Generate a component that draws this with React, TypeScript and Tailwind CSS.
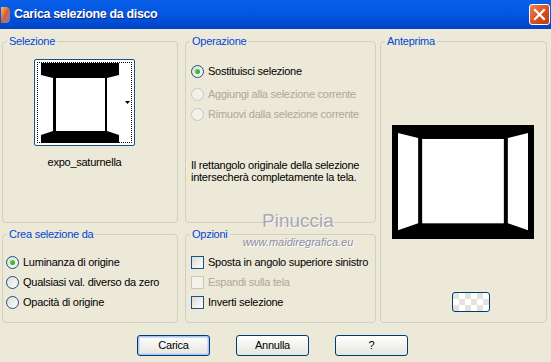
import type { ReactNode } from 'react';

const FONT = { fontFamily: '"Liberation Sans", Arial, sans-serif' };

function Group({ title, className, children }: { title: string; className: string; children?: ReactNode }) {
  return (
    <fieldset className={`rounded-[4px] border border-[#D0D0BF] ${className}`}>
      <legend className="ml-[4px] px-[2px] text-[11px] leading-[13px] text-[#0046D5]">{title}</legend>
      {children}
    </fieldset>
  );
}

function Radio({ label, checked, disabled }: { label: string; checked?: boolean; disabled?: boolean }) {
  return (
    <div className="flex h-[20px] items-center gap-[4px]">
      <span
        className={`flex h-[13px] w-[13px] items-center justify-center rounded-full border ${
          disabled ? 'border-[#CAC8BB] bg-[#F2F1EA]' : 'border-[#1C5180] bg-gradient-to-br from-[#DCDCD5] to-white'
        }`}
      >
        {checked && <span className="h-[5px] w-[5px] rounded-full bg-gradient-to-br from-[#55D751] to-[#21A121]" />}
      </span>
      <span className={disabled ? 'text-[#ACA899]' : 'text-black'}>{label}</span>
    </div>
  );
}

function Check({ label, disabled }: { label: string; disabled?: boolean }) {
  return (
    <div className="flex h-[20px] items-center gap-[4px]">
      <span
        className={`h-[13px] w-[13px] border ${
          disabled ? 'border-[#CAC8BB] bg-[#F2F1EA]' : 'border-[#1C5180] bg-gradient-to-br from-[#DCDCD5] to-white'
        }`}
      />
      <span className={disabled ? 'text-[#ACA899]' : 'text-black'}>{label}</span>
    </div>
  );
}

function XpButton({ label, isDefault }: { label: string; isDefault?: boolean }) {
  return (
    <button
      type="button"
      className={`h-[21px] w-[73px] rounded-[3px] border border-[#003C74] bg-gradient-to-b from-white to-[#E6E5DE] text-[11px] text-black ${
        isDefault ? 'shadow-[inset_0_0_0_1px_#A8C6F2,inset_0_0_0_2px_#CEDDF7]' : ''
      }`}
    >
      {label}
    </button>
  );
}

// room-shaped selection for the preview
function RoomShape({ w, h, border }: { w: number; h: number; border: number }) {
  const b = border;
  const side = (w - 2 * b) * 0.155;
  const line = 4;
  const top = h * 0.07;
  const bot = h * 0.88;
  return (
    <svg width={w} height={h} viewBox={`0 0 ${w} ${h}`}>
      <rect width={w} height={h} fill="#000" />
      <polygon points={`${b},${top} ${b + side},${top + 5} ${b + side},${bot - 2} ${b},${bot + 5}`} fill="#fff" />
      <rect x={b + side + line} y={top + 6} width={w - 2 * (b + side + line)} height={bot - top - 8} fill="#fff" />
      <polygon
        points={`${w - b - side},${top + 5} ${w - b},${top} ${w - b},${bot + 5} ${w - b - side},${bot - 2}`}
        fill="#fff"
      />
    </svg>
  );
}

export default function App() {
  return (
    <div className="relative h-[362px] w-[551px] overflow-hidden bg-[#ECE9D8] text-[11px] tracking-[-0.25px]" style={FONT}>
      {/* title bar */}
      <div className="flex h-[29px] items-center bg-gradient-to-b from-[#0A5FE8] via-[#0256E3] to-[#0043C6] pl-[1px] pr-[1px]">
        <span className="h-[16px] w-[9px] rounded-r-[4px] bg-gradient-to-br from-[#F4C26A] via-[#D85B2E] to-[#4A7BD0]" />
        <span className="ml-[4px] text-[12.5px] font-bold tracking-[-0.35px] text-white [text-shadow:1px_1px_0_#0A2A7A]">
          Carica selezione da disco
        </span>
        <span className="ml-auto flex h-[21px] w-[21px] items-center justify-center rounded-[3px] border border-white bg-gradient-to-br from-[#E8825E] via-[#D9531F] to-[#B83A10]">
          <svg width="13" height="13" viewBox="0 0 13 13">
            <path d="M2 2 L11 11 M11 2 L2 11" stroke="#fff" strokeWidth="2.2" strokeLinecap="square" />
          </svg>
        </span>
      </div>

      {/* body */}
      <div className="flex pl-[2px] pt-[6px]">
        <div className="flex w-[176px] flex-col gap-[5px]">
          <Group title="Selezione" className="h-[188px]">
            <div className="ml-[31px] mt-[11px] flex w-[101px] flex-col items-center">
              <div className="relative flex h-[87px] w-[101px] items-center rounded-[2px] border border-[#1C5180] bg-white">
                <div className="absolute inset-[2px] border border-dotted border-black" />
                <div className="ml-[6px]">
                  <svg width="78" height="80" viewBox="0 0 78 80">
                    <rect width="78" height="80" fill="#000" />
                    <polygon points="0,12 12,15 12,68 0,72" fill="#fff" />
                    <rect x="15" y="15" width="49" height="53" fill="#fff" />
                    <polygon points="66,15 78,12 78,72 66,68" fill="#fff" />
                  </svg>
                </div>
                <svg className="ml-[6px]" width="5" height="3" viewBox="0 0 5 3">
                  <polygon points="0,0 5,0 2.5,3" fill="#000" />
                </svg>
              </div>
              <div className="mt-[8px] text-black">expo_saturnella</div>
            </div>
          </Group>
          <Group title="Crea selezione da" className="h-[95px]">
            <div className="ml-[3px] mt-[11px] flex flex-col">
              <Radio label="Luminanza di origine" checked />
              <Radio label="Qualsiasi val. diverso da zero" />
              <Radio label="Opacità di origine" />
            </div>
          </Group>
        </div>

        <div className="ml-[7px] flex w-[191px] flex-col gap-[5px]">
          <Group title="Operazione" className="h-[188px]">
            <div className="ml-[5px] mt-[13px] flex flex-col">
              <div className="mb-[3px]">
                <Radio label="Sostituisci selezione" checked />
              </div>
              <Radio label="Aggiungi alla selezione corrente" disabled />
              <Radio label="Rimuovi dalla selezione corrente" disabled />
            </div>
            <p className="ml-[5px] mt-[35px] leading-[12px] text-black">
              Il rettangolo originale della selezione
              <br />
              intersecherà completamente la tela.
            </p>
          </Group>
          <Group title="Opzioni" className="h-[95px]">
            <div className="ml-[5px] mt-[11px] flex flex-col">
              <Check label="Sposta in angolo superiore sinistro" />
              <Check label="Espandi sulla tela" disabled />
              <Check label="Inverti selezione" />
            </div>
          </Group>
        </div>

        <div className="ml-[4px] w-[167px]">
          <Group title="Anteprima" className="h-[288px]">
            <div className="ml-[11px] mt-[77px]">
              <RoomShape w={142} h={114} border={6} />
            </div>
            <div className="ml-[71px] mt-[53px] h-[20px] w-[38px] rounded-[3px] border border-[#003C74] bg-[repeating-conic-gradient(#ffffff_0_25%,#E4E3DD_0_50%)] bg-[length:12px_12px]" />
          </Group>
        </div>
      </div>

      {/* buttons */}
      <div className="mt-[12px] flex gap-[26px] pl-[137px]">
        <XpButton label="Carica" isDefault />
        <XpButton label="Annulla" />
        <XpButton label="?" />
      </div>

      {/* watermark */}
      <div className="pointer-events-none absolute left-[237px] top-[210px] flex w-[122px] flex-col items-center tracking-normal">
        <span className="text-[19px] leading-[22px] text-[#9A98B0] opacity-80 [text-shadow:1px_1px_0_#ffffff]">
          Pinuccia
        </span>
        <span className="mt-[4px] text-[11px] italic leading-[12px] text-[#8E8CA4] [text-shadow:1px_1px_0_#ffffff]">
          www.maidiregrafica.eu
        </span>
      </div>
    </div>
  );
}
